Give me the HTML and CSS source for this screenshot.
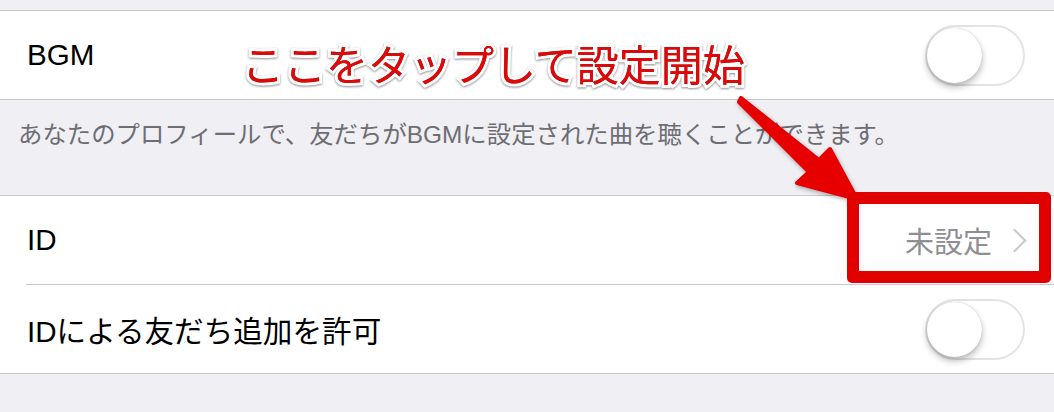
FILE: index.html
```html
<!DOCTYPE html>
<html lang="ja">
<head>
    <meta charset="UTF-8">
    <meta name="viewport" content="width=device-width, initial-scale=1.0">
    <title>設定</title>
    <link rel="stylesheet" href="styles.css">
</head>
<body>

<div class="screen">
    <div class="group">
        <div class="row">
            <span class="label">BGM</span>
            <span class="toggle"><span class="knob"></span></span>
        </div>
    </div>
    <div class="footer">あなたのプロフィールで、友だちがBGMに設定された曲を聴くことができます。</div>

    <div class="group">
        <div class="row row-inset">
            <span class="label">ID</span>
            <span class="detail">未設定<span class="chevron"></span></span>
        </div>
        <div class="row">
            <span class="label">IDによる友だち追加を許可</span>
            <span class="toggle"><span class="knob"></span></span>
        </div>
    </div>

    <!-- 注釈 -->
    <div class="note">ここをタップして設定開始</div>
    <svg class="arrow" width="1054" height="412" viewBox="0 0 1054 412">
        <polygon points="741,98 819,160 830,149 857,199 797,183 809,172 739,102"
                 fill="#e60000" stroke="#e60000" stroke-width="4" stroke-linejoin="round"/>
    </svg>
    <div class="highlight"></div>
</div>

</body>
</html>
```

FILE: styles.css
```css
/* iOS風の設定画面 */
body {
    margin: 0;
    padding: 0;
    background-color: #efeff4;
    font-family: "Liberation Sans", "Noto Sans CJK JP", sans-serif;
}
.screen {
    position: relative;
    width: 1054px;
    height: 412px;
    padding-top: 10px;
    box-sizing: border-box;
    overflow: hidden;
}
.group {
    background-color: white;
    border-top: 1px solid #c8c7cc;
    border-bottom: 1px solid #c8c7cc;
}
.row {
    height: 88px;
    display: flex;
    align-items: center;
    justify-content: space-between;
    padding: 0 28px 0 27px;
    box-sizing: border-box;
}
.row-inset {
    height: 89px;
    border-bottom: 1px solid #c8c7cc;
    margin-left: 26px;
    padding-left: 1px;
}
.label {
    font-size: 29.6px;
    color: #000;
}
.footer {
    height: 95px;
    padding: 15px 0 0 18px;
    box-sizing: border-box;
    font-size: 24.4px;
    color: #6d6d72;
}
.toggle {
    position: relative;
    width: 100px;
    height: 61px;
    border: 2px solid #e3e3e6;
    border-radius: 31px;
    box-sizing: border-box;
    background: white;
    margin-right: 1px;
}
.knob {
    position: absolute;
    left: 0;
    top: 1px;
    width: 55px;
    height: 55px;
    border-radius: 50%;
    background: white;
    box-shadow: 0 4px 7px rgba(0,0,0,0.28), 0 0 1px rgba(0,0,0,0.25);
}
.detail {
    display: flex;
    align-items: center;
    font-size: 29px;
    color: #8e8e93;
    margin-right: 1px;
}
.chevron {
    width: 15px;
    height: 15px;
    border-top: 2.5px solid #c7c7cc;
    border-right: 2.5px solid #c7c7cc;
    transform: rotate(45deg);
    margin: 0 2px 0 14px;
}
.note {
    position: absolute;
    left: 242px;
    top: 32px;
    font-size: 42px;
    font-weight: normal;
    color: #d90a0a;
    -webkit-text-stroke: 6px white;
    paint-order: stroke fill;
    text-shadow: 0 0 0 #d90a0a;
    filter: drop-shadow(0 1px 1px rgba(0,0,0,0.45));
}
.arrow {
    position: absolute;
    left: 0;
    top: 0;
    filter: drop-shadow(1px 2px 2px rgba(0,0,0,0.3));
}
.highlight {
    position: absolute;
    left: 847px;
    top: 192px;
    width: 204px;
    height: 91px;
    border: 12px solid #e00000;
    border-radius: 5px;
    box-sizing: border-box;
}
```
